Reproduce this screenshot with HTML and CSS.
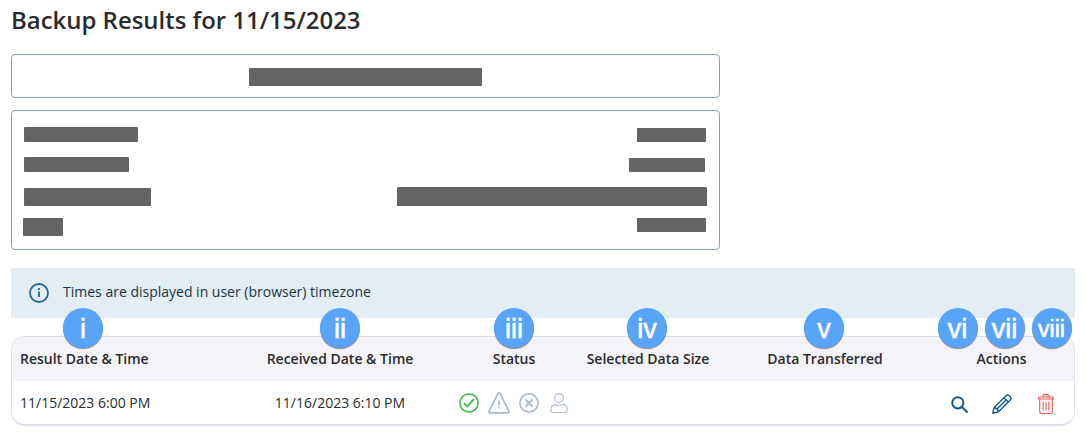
FILE: index.html
```html
<!DOCTYPE html>
<html lang="en">
<head>
    <meta charset="utf-8">
    <title>Backup Results</title>
    <meta name="viewport" content="width=device-width, initial-scale=1">
    <link rel="stylesheet" href="styles.css">
</head>
<body>
    <div class="container">
        <h1>Backup Results for 11/15/2023</h1>

        <div class="box box-title">
            <span class="redacted name"></span>
        </div>

        <div class="box box-details">
            <div class="labels">
                <span class="redacted label-1"></span>
                <span class="redacted label-2"></span>
                <span class="redacted label-3"></span>
                <span class="redacted label-4"></span>
            </div>
            <div class="values">
                <span class="redacted value-1"></span>
                <span class="redacted value-2"></span>
                <span class="redacted value-3"></span>
                <span class="redacted value-4"></span>
            </div>
        </div>

        <div class="notice">
            <svg class="icon-info" width="20" height="20" viewBox="0 0 20 20" fill="none" stroke="#216a98" stroke-width="1.8">
                <circle cx="10" cy="10" r="9"/>
                <path d="M10 8.5v5.5M10 5v2"/>
            </svg>
            <span>Times are displayed in user (browser) timezone</span>
        </div>

        <div class="results">
            <div class="row head">
                <div class="cell first">Result Date &amp; Time<span class="badge b1">i</span></div>
                <div class="cell">Received Date &amp; Time<span class="badge b2">ii</span></div>
                <div class="cell">Status<span class="badge b3">iii</span></div>
                <div class="cell">Selected Data Size<span class="badge b4">iv</span></div>
                <div class="cell">Data Transferred<span class="badge b5">v</span></div>
                <div class="cell last">Actions
                    <span class="badge b6">vi</span>
                    <span class="badge b7">vii</span>
                    <span class="badge b8">viii</span>
                </div>
            </div>
            <div class="row">
                <div class="cell first">11/15/2023 6:00 PM</div>
                <div class="cell">11/16/2023 6:10 PM</div>
                <div class="cell status">
                    <svg width="20" height="20" viewBox="0 0 20 20" fill="none" stroke="#4dbb56" stroke-width="1.7">
                        <circle cx="10" cy="10" r="9.1"/>
                        <path d="M5 10.3l3.2 3.1 6.7-7.2" stroke-width="2"/>
                    </svg>
                    <svg width="22" height="22" viewBox="0 0 22 22" fill="none" stroke="#abbad5" stroke-width="1.8" stroke-linejoin="round">
                        <path d="M9.9 1.6L1.1 19.2q-.5 1.6 1 1.7h17.8q1.5-.1 1-1.7L12.1 1.6q-1.1-1.3-2.2 0z"/>
                        <path d="M11 8.5v5M11 14.8v1.7"/>
                    </svg>
                    <svg width="20" height="20" viewBox="0 0 20 20" fill="none" stroke="#abbad5" stroke-width="1.7">
                        <circle cx="10" cy="10" r="9.1"/>
                        <path d="M6.5 6.5l7 7M13.5 6.5l-7 7" stroke-width="1.9"/>
                    </svg>
                    <svg class="icon-user" width="18" height="20" viewBox="0 0 18 20" fill="none" stroke="#abbad5" stroke-width="1.1">
                        <circle cx="9" cy="5" r="4.4"/>
                        <path d="M5.3 11.6C2.7 11.6 1 13.6 1 16.3v1.4q0 1.8 1.8 1.8h12.4q1.8 0 1.8-1.8v-1.4c0-2.7-1.7-4.7-4.3-4.7q-3.7 1.2-7.4 0z"/>
                    </svg>
                </div>
                <div class="cell"></div>
                <div class="cell"></div>
                <div class="cell actions">
                    <svg width="18" height="18" viewBox="0 0 18 18" fill="none" stroke="#155a8a" stroke-width="2">
                        <circle cx="6.8" cy="7.8" r="5.6"/>
                        <path d="M10.8 11.8l5.9 5.9"/>
                    </svg>
                    <svg width="20" height="20" viewBox="0 0 20 20" fill="none" stroke="#155a8a" stroke-width="1.4" stroke-linejoin="round">
                        <path d="M.8 19.2l1.4-5.7L14 1.7q1.9-1.7 3.8.5 2.2 1.9.5 3.8L6.5 17.8z"/>
                        <path d="M12 3.8l4.2 4.2M2.2 13.5q3.5.8 4.3 4.3M14 5.9L5 14.9"/>
                    </svg>
                    <svg class="icon-trash" width="16" height="20" viewBox="0 0 16 20" fill="none" stroke="#fb5555" stroke-width="1.1">
                        <path d="M.5 5V4q0-1 1-1h13q1 0 1 1v1H.5zM5 3V1.5q0-1 1-1h4q1 0 1 1V3M1.7 5v12.5q0 2 2 2h8.6q2 0 2-2V5M5.2 7.5v9M8 7.5v9M10.8 7.5v9"/>
                    </svg>
                </div>
            </div>
        </div>
    </div>
</body>
</html>
```

FILE: styles.css
```css
body {
    font-family: "Open Sans", sans-serif;
    font-size: 14px;
    margin: 0;
    padding: 0 11px;
    background: #fff;
    color: #2b2b2d;
}
h1 {
    margin: 0 0 14px;
    font-size: 23.95px;
    line-height: 40px;
    font-weight: 600;
}
.box {
    box-sizing: border-box;
    width: 709px;
    border: 1px solid #819fc8;
    border-radius: 4px;
    margin-bottom: 12px;
}
.box-title {
    height: 44px;
    display: flex;
    justify-content: center;
    align-items: center;
    padding-top: 2px;
}
.box-details {
    height: 140px;
    display: flex;
    justify-content: space-between;
    padding: 16px 12px 0;
    margin-bottom: 18px;
}
.labels,
.values {
    display: flex;
    flex-direction: column;
}
.values {
    align-items: flex-end;
    padding-top: 1px;
}
.redacted {
    display: block;
    background: #636466;
    border-radius: 1px;
}
.name {
    width: 233px;
    height: 18px;
}
.label-1 {
    width: 114px;
    height: 15px;
    margin-bottom: 15px;
}
.label-2 {
    width: 105px;
    height: 15px;
    margin-bottom: 16px;
}
.label-3 {
    width: 127px;
    height: 18px;
    margin-bottom: 12px;
}
.label-4 {
    width: 40px;
    height: 18px;
    margin-left: -1px;
}
.value-1 {
    width: 69px;
    height: 14px;
    margin: 0 1px 16px 0;
}
.value-2 {
    width: 76px;
    height: 14px;
    margin: 0 2px 15px 0;
}
.value-3 {
    width: 310px;
    height: 19px;
    margin-bottom: 12px;
}
.value-4 {
    width: 69px;
    height: 14px;
    margin-right: 1px;
}
.notice {
    display: flex;
    align-items: center;
    gap: 14px;
    height: 50px;
    padding-left: 18px;
    margin-bottom: 18px;
    background: #e4edf3;
    color: #17344a;
}
.notice span {
    padding-bottom: 3px;
}
.results {
    box-sizing: border-box;
    height: 90px;
    border: 1px solid #dfddeb;
    border-bottom-width: 2px;
    border-radius: 14px;
}
.row {
    display: grid;
    grid-template-columns: 220px 216px 132px 136px 218px 140px;
    height: 43px;
}
.row.head {
    height: 44px;
    background: #f4f3f8;
    border-radius: 13px 13px 0 0;
    font-weight: 600;
}
.cell {
    position: relative;
    display: flex;
    align-items: center;
    justify-content: center;
}
.head .cell {
    padding-bottom: 2px;
}
.cell.first {
    justify-content: flex-start;
    padding-left: 8px;
}
.cell.last {
    padding-right: 5px;
}
.status {
    gap: 9px;
    padding-right: 1px;
}
.icon-user {
    margin-left: 2px;
}
.actions {
    justify-content: flex-start;
    gap: 23px;
    padding: 2px 0 0 17px;
}
.icon-trash {
    margin-left: 3px;
}
.badge {
    position: absolute;
    top: -29px;
    left: 88px;
    width: 40px;
    height: 40px;
    border-radius: 50%;
    background: #58a4f9;
    box-shadow: 0 1px 1px rgba(0,0,0,0.45);
    color: #fff;
    font-family: "Liberation Sans", Arial, sans-serif;
    font-size: 27px;
    font-weight: 400;
    line-height: 43px;
    text-align: center;
    -webkit-text-stroke: 0.6px #fff;
}
.badge.b1 {
    left: 51px;
}
.badge.b3 {
    left: 46px;
}
.badge.b4 {
    left: 47px;
}
.badge.b6 {
    left: 3.5px;
}
.badge.b7 {
    left: 50.5px;
}
.badge.b8 {
    left: 97.5px;
    font-size: 23px;
    line-height: 42px;
}
```
